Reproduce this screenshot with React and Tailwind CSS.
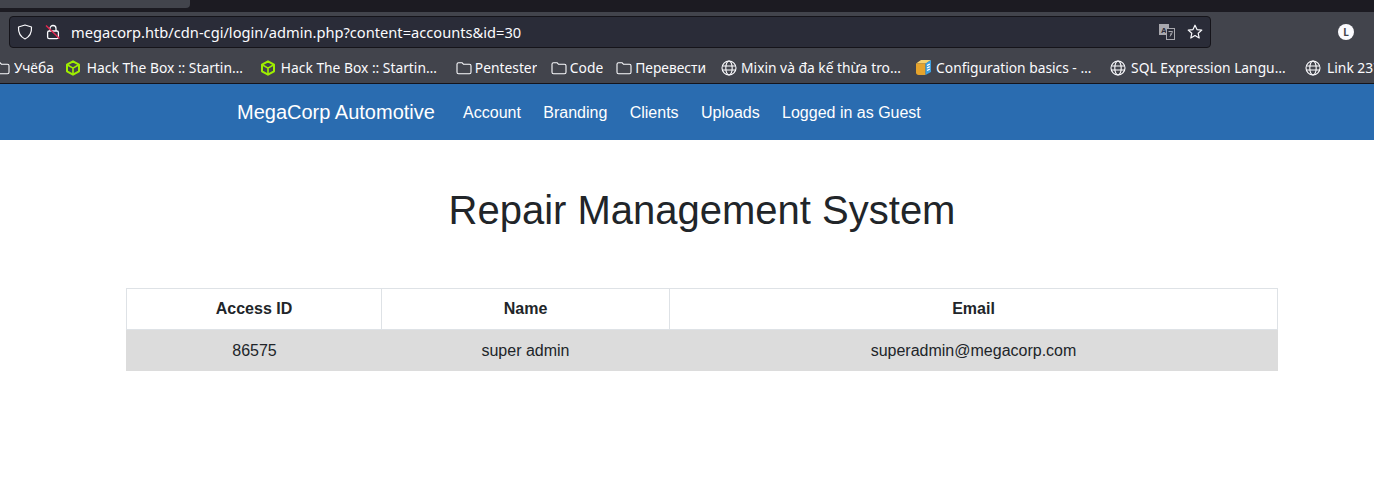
import React from "react";

const chrome = { fontFamily: '"Noto Sans", sans-serif' };

function Folder() {
  return (
    <svg width="16" height="16" viewBox="0 0 16 16" fill="none" stroke="#fbfbfe" strokeWidth="1.1" className="shrink-0">
      <path d="M1 4.200c0-.9.6-1.500 1.500-1.500h3.500l1.600 1.600h5.900c.9 0 1.500.6 1.500 1.500v6.400c0 .9-.6 1.500-1.500 1.500H2.500c-.9 0-1.500-.6-1.500-1.500z" strokeLinejoin="round" />
    </svg>
  );
}

function Globe() {
  return (
    <svg width="16" height="16" viewBox="0 0 16 16" fill="none" stroke="#fbfbfe" strokeWidth="1.1" className="shrink-0">
      <circle cx="8" cy="8" r="7" />
      <ellipse cx="8" cy="8" rx="3.2" ry="7" />
      <path d="M1.200 6h13.600M1.200 10h13.600" />
    </svg>
  );
}

function Cube() {
  return (
    <svg width="16" height="16" viewBox="0 0 16 16" fill="none" stroke="#9fef00" strokeWidth="2" strokeLinejoin="round" className="shrink-0">
      <path d="M8 1.300l6 3.400v6.600l-6 3.400-6-3.400V4.700z" />
      <path d="M2.200 4.800L8 8.100l5.800-3.300M8 8.100v6.300" strokeWidth="1.600" />
    </svg>
  );
}

function Box() {
  return (
    <svg width="17" height="17" viewBox="0 0 17 17" className="shrink-0">
      <path d="M1 4.500L6 1h10l-5 3.500z" fill="#f6d270" />
      <path d="M1 4.500h9.500V16H3.500C2 16 1 15 1 13.500z" fill="#e5a32c" />
      <path d="M10.500 4.500L16 1v12l-5.500 3z" fill="#3d9fe0" />
      <path d="M12 6.500l2.800-1.400M12 9l2.800-1.400M12 11.500l2.800-1.400" stroke="#fff" strokeWidth="1.200" />
    </svg>
  );
}

function Mark({ icon, text, width, gap, className = "" }) {
  return (
    <div className={`flex shrink-0 items-center ${gap} ${className}`}>
      {icon}
      <span className="truncate text-[13.8px] leading-[20px] text-[#fbfbfe]" style={width ? { width } : undefined}>
        {text}
      </span>
    </div>
  );
}

export default function App() {
  return (
    <div className="h-[479px] w-[1374px] overflow-hidden bg-white" style={{ fontFamily: '"Liberation Sans", Arial, sans-serif' }}>
      <div style={chrome}>
        <div className="h-[12px] bg-[#1c1b22]">
          <div className="h-[8px] w-[190px] rounded-br-[4px] bg-[#42444c]" />
        </div>
        <div className="flex h-[38px] items-start bg-[#42444c] pt-[4px]">
          <div className="ml-[9px] flex h-[32px] w-[1202px] items-center rounded-[4px] border border-[#15141a] bg-[#2a2c38] pl-[7px] pr-[7px]">
            <svg width="16" height="16" viewBox="0 0 16 16" fill="none" stroke="#fbfbfe" strokeWidth="1.200" strokeLinejoin="round" className="shrink-0">
              <path d="M8 1l6.500 2c.3 5.500-1.600 9.600-6.500 12C3.100 12.600 1.200 8.500 1.500 3z" />
            </svg>
            <svg width="16" height="16" viewBox="0 0 16 16" fill="none" className="ml-[12px] shrink-0">
              <path d="M5 7V4.500a3 3 0 016 0V7" stroke="#fbfbfe" strokeWidth="1.300" />
              <rect x="2.600" y="7" width="10.800" height="7.600" rx="1.600" stroke="#fbfbfe" strokeWidth="1.300" />
              <path d="M1 1.500l13.500 13" stroke="#e22850" strokeWidth="1.500" />
            </svg>
            <span className="ml-[10px] text-[14.65px] leading-[20px] text-[#fbfbfe]">megacorp.htb/cdn-cgi/login/admin.php?content=accounts&amp;id=30</span>
            <div className="ml-auto flex items-center gap-[12px]">
              <svg width="16" height="16" viewBox="0 0 16 16" className="shrink-0">
                <rect x="0" y="0" width="10" height="11" fill="#a8a8ae" />
                <text x="2" y="9" fontSize="8" fontWeight="700" fill="#2a2c38" fontFamily="Liberation Sans">A</text>
                <rect x="7.500" y="4.500" width="8" height="11" fill="#2a2c38" stroke="#a8a8ae" />
                <path d="M9.500 7.500h4l-1 2.500-1.500 2.500M11.500 9.500l.5 1.500" fill="none" stroke="#a8a8ae" strokeWidth="1" />
              </svg>
              <svg width="16" height="16" viewBox="0 0 16 16" fill="none" stroke="#fbfbfe" strokeWidth="1.200" strokeLinejoin="round" className="shrink-0">
                <path d="M8 1.200l2 4.400 4.800.5-3.600 3.200 1 4.700L8 11.600 3.800 14l1-4.700L1.200 6.100l4.800-.5z" />
              </svg>
            </div>
          </div>
          <div className="ml-[127px] mt-[8px] flex h-[16px] w-[16px] items-center justify-center rounded-full bg-[#fbfbfe] text-[10px] font-bold text-[#42444c]">L</div>
        </div>
        <div className="flex h-[34px] items-center overflow-hidden border-b border-[#15141a] bg-[#42444c] pt-[2px]">
          <Mark className="-ml-[6px]" gap="gap-[4px]" icon={<Folder />} text="Учёба" />
          <Mark className="ml-[11px]" gap="gap-[6px]" icon={<Cube />} text="Hack The Box :: Starting Point" width="160px" />
          <Mark className="ml-[13px]" gap="gap-[5px]" icon={<Cube />} text="Hack The Box :: Starting Point" width="160px" />
          <Mark className="ml-[15px]" gap="gap-[3px]" icon={<Folder />} text="Pentester" />
          <Mark className="ml-[13.5px]" gap="gap-[3px]" icon={<Folder />} text="Code" />
          <Mark className="ml-[13px]" gap="gap-[3px]" icon={<Folder />} text="Перевести" />
          <Mark className="ml-[15px]" gap="gap-[4px]" icon={<Globe />} text="Mixin và đa kế thừa trong Python" width="160px" />
          <Mark className="ml-[14px]" gap="gap-[4px]" icon={<Box />} text="Configuration basics - Git documentation" width="160px" />
          <Mark className="ml-[14px]" gap="gap-[5px]" icon={<Globe />} text="SQL Expression Language Tutorial" width="159px" />
          <Mark className="ml-[15px]" gap="gap-[6px]" icon={<Globe />} text="Link 237" />
        </div>
      </div>

      <nav className="flex h-[56px] items-center bg-[#2a6cb0] pl-[237px] text-white">
        <span className="mr-[17px] text-[20px] leading-[30px]">MegaCorp Automotive</span>
        <div className="flex pt-[2px] text-[16px] leading-[24px]">
          <a className="px-[11.200px]">Account</a>
          <a className="px-[11.200px]">Branding</a>
          <a className="px-[11.200px]">Clients</a>
          <a className="px-[11.200px]">Uploads</a>
          <a className="px-[11.200px]">Logged in as Guest</a>
        </div>
      </nav>

      <main className="ml-[126px] w-[1152px] text-[#212529]">
        <h1 className="pt-[46px] pb-[54px] text-center text-[40px] font-normal leading-[48px]">Repair Management System</h1>
        <table className="w-full table-fixed border-separate border-spacing-0 text-center text-[16px] leading-[24px]">
          <colgroup>
            <col className="w-[255px]" />
            <col className="w-[288px]" />
            <col />
          </colgroup>
          <thead>
            <tr className="h-[42px]">
              <th className="border-y border-l border-[#dee2e6] font-bold">Access ID</th>
              <th className="border-y border-l border-[#dee2e6] font-bold">Name</th>
              <th className="border border-[#dee2e6] font-bold">Email</th>
            </tr>
          </thead>
          <tbody>
            <tr className="h-[41px] bg-[#dcdcdc]">
              <td className="pl-[2px] pt-[1px]">86575</td>
              <td className="pl-[1px] pt-[1px]">super admin</td>
              <td className="pt-[1px]">superadmin@megacorp.com</td>
            </tr>
          </tbody>
        </table>
      </main>
    </div>
  );
}
